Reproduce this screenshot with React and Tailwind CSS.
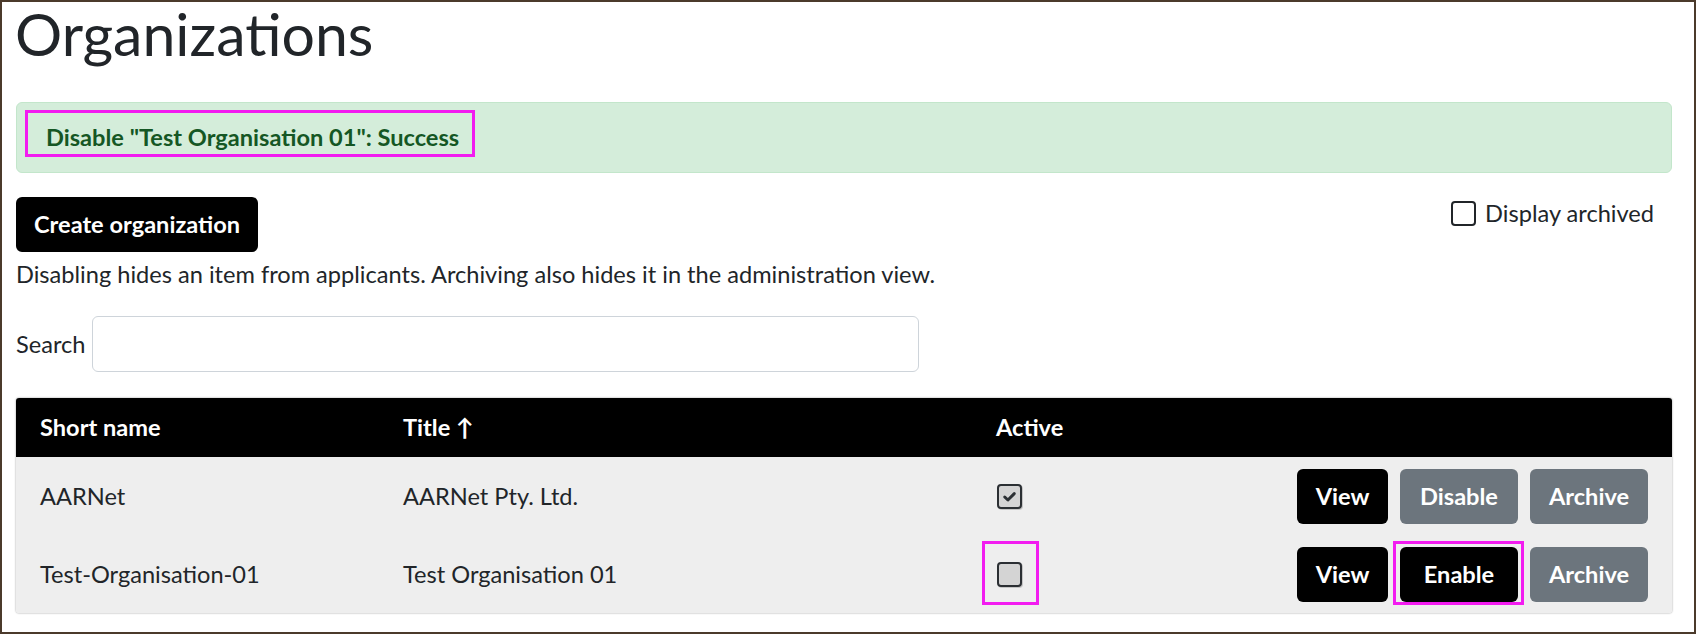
import React from 'react';

const rows = [
  { short: 'AARNet', title: 'AARNet Pty. Ltd.', active: true },
  { short: 'Test-Organisation-01', title: 'Test Organisation 01', active: false },
];

const Mark = ({ className }) => (
  <span className={`pointer-events-none absolute border-[3px] border-[#f21cf0] ${className}`} />
);

const Btn = ({ children, gray, className = '' }) => (
  <button
    className={`h-[55px] rounded-[6px] px-[18px] text-[23.6px] font-bold text-white ${
      gray ? 'bg-[#6c757d]' : 'bg-black'
    } ${className}`}
  >
    {children}
  </button>
);

const Check = ({ checked }) => (
  <span className="flex h-[25px] w-[25px] items-center justify-center rounded-[4px] border-2 border-[#2b2f33] bg-[#d4d4d4] shadow-[1px_1px_0_#c4c4c4]">
    {checked && (
      <svg viewBox="0 0 16 16" className="h-[17px] w-[17px]">
        <path d="M3.5 8.5l3 2.8 6-6" fill="none" stroke="#2b2f33" strokeWidth="2.8" strokeLinecap="round" strokeLinejoin="round" />
      </svg>
    )}
  </span>
);

const App = () => {
  return (
    <div className="box-border h-[634px] border-2 border-[#4b3a2b] bg-white pl-[14px] pr-[22px] font-['Lato',sans-serif] text-[23.6px] leading-[1.5] text-[#212529]">
      <h1 className="-ml-[1px] text-[59px] font-normal leading-[1.1]">Organizations</h1>

      <div className="mt-[35px] flex h-[71px] items-center rounded-[6px] border border-[#c3e6cb] bg-[#d4edda] pl-[29px]">
        <span className="relative font-bold text-[#155724]">
          Disable "Test Organisation 01": Success
          <Mark className="-top-[10px] -bottom-[2px] -left-[21px] -right-[16px]" />
        </span>
      </div>

      <div className="mt-[24px] flex items-start justify-between">
        <Btn>Create organization</Btn>
        <label className="mr-[18px] -mt-[1px] flex items-center gap-[9px]">
          <span className="h-[25px] w-[25px] rounded-[4px] border-2 border-[#212529] bg-white" />
          Display archived
        </label>
      </div>

      <p className="mt-[5px]">
        Disabling hides an item from applicants. Archiving also hides it in the administration view.
      </p>

      <div className="mt-[24px] flex items-center gap-[7px]">
        <span>Search</span>
        <input className="h-[56px] w-[827px] rounded-[6px] border border-[#ced4da] bg-white px-3 outline-none" />
      </div>

      <div className="mt-[26px] overflow-hidden rounded-[3px] shadow-[0_0_2px_rgba(0,0,0,0.45)]">
        <div className="grid h-[59px] grid-cols-[363px_593px_1fr] items-center bg-black font-bold text-white">
          <div className="pl-[24px]">Short name</div>
          <div className="pl-[24px]">Title ↑</div>
          <div className="pl-[24px]">Active</div>
        </div>
        {rows.map((r) => (
          <div key={r.short} className="grid h-[78px] grid-cols-[363px_593px_1fr] items-center bg-[#eeeeee]">
            <div className="pl-[24px]">{r.short}</div>
            <div className="pl-[24px]">{r.title}</div>
            <div className="flex items-center justify-between pl-[25px] pr-[24px]">
              <span className="relative">
                <Check checked={r.active} />
                {!r.active && <Mark className="-top-[21px] -bottom-[18px] -left-[15px] -right-[17px]" />}
              </span>
              <div className="flex gap-[12px]">
                <Btn className="w-[91px]">View</Btn>
                {r.active ? (
                  <Btn gray className="w-[118px]">Disable</Btn>
                ) : (
                  <span className="relative">
                    <Btn className="w-[118px]">Enable</Btn>
                    <Mark className="-top-[6px] -bottom-[3px] -left-[7px] -right-[6px]" />
                  </span>
                )}
                <Btn gray className="w-[118px]">Archive</Btn>
              </div>
            </div>
          </div>
        ))}
      </div>
    </div>
  );
};

export default App;
